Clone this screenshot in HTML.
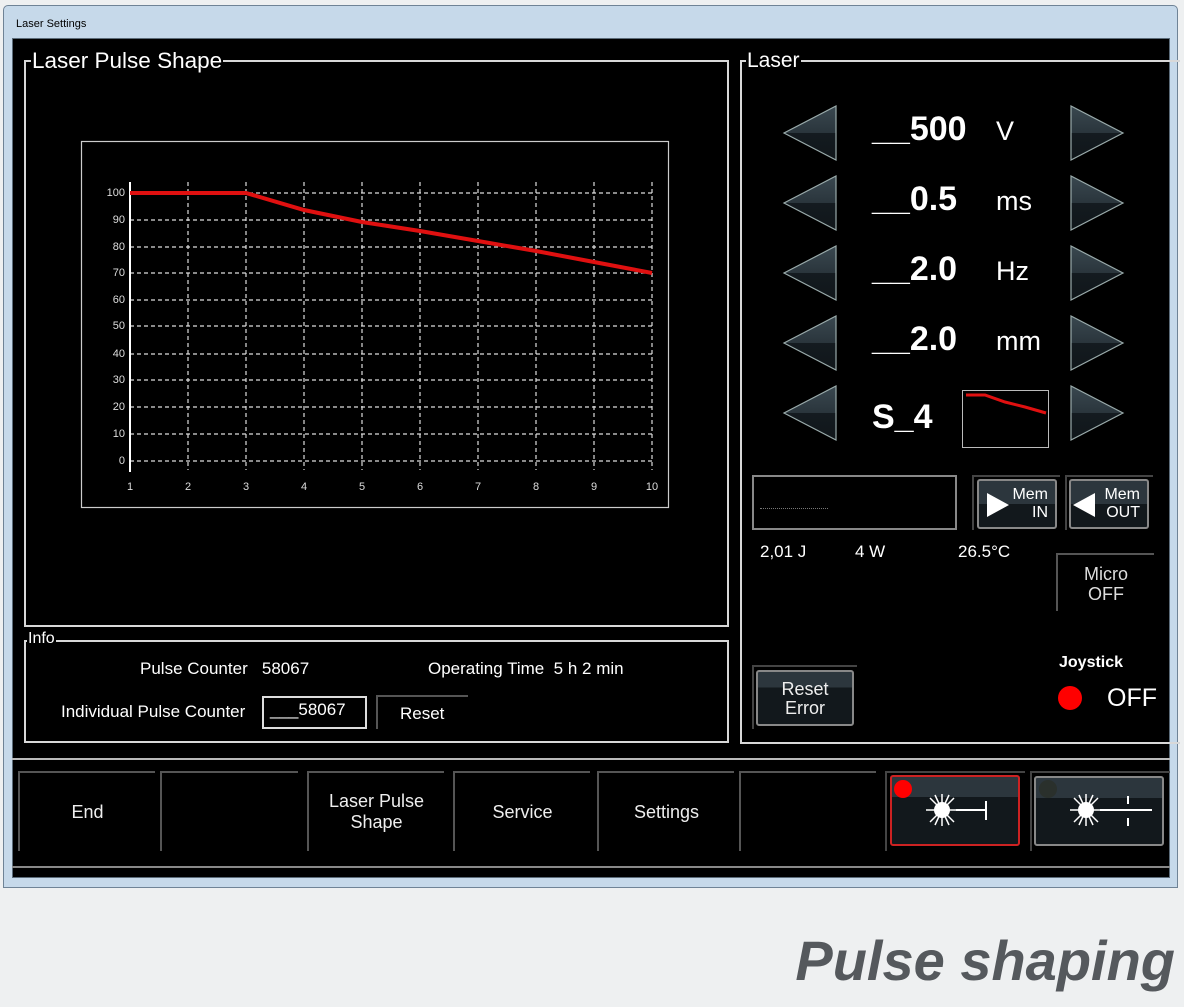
<!DOCTYPE html>
<html><head><meta charset="utf-8"><style>
*{margin:0;padding:0;box-sizing:border-box}
body{width:1184px;height:1007px;background:#eef0f1;position:relative;overflow:hidden;font-family:"Liberation Sans",sans-serif;color:#fff}
.abs{position:absolute}
.win{left:3px;top:5px;width:1175px;height:883px;background:#c6d9ea;border:1px solid #6f8396;border-radius:5px 5px 0 0}
.title{left:16px;top:18px;font-size:11px;color:#000}
.inner{left:12px;top:38px;width:1158px;height:840px;background:#000;border:1px solid #5c6c7a}
.grp{border:2px solid #d8d8d8}
.lbl{background:#000;padding:0 1px;line-height:1}
.t{position:absolute;white-space:nowrap}
.n{font-family:"Liberation Sans Narrow","Liberation Sans",sans-serif}
.btn{position:absolute;border-top:2px solid #555;border-left:2px solid #555;color:#eee;font-size:18px;text-align:center;display:flex;align-items:center;justify-content:center;line-height:1.15;font-family:"Liberation Sans Narrow","Liberation Sans",sans-serif}
</style></head><body>
<div class="abs win"></div>
<div class="abs title">Laser Settings</div>
<div class="abs inner"></div>

<div class="abs grp" style="left:24px;top:60px;width:705px;height:567px"></div>
<div class="abs lbl" style="left:31px;top:50px;font-size:22.5px">Laser Pulse Shape</div>
<svg class="abs" style="left:0;top:0" width="740" height="520">
<rect x="81.5" y="141.5" width="587" height="366" fill="#000" stroke="#ccc" stroke-width="1.2"/>
<g stroke="#ddd" stroke-width="1.2" stroke-dasharray="4,3">
<line x1="130" x2="654" y1="193" y2="193"/><line x1="130" x2="654" y1="220" y2="220"/><line x1="130" x2="654" y1="247" y2="247"/><line x1="130" x2="654" y1="273" y2="273"/><line x1="130" x2="654" y1="300" y2="300"/><line x1="130" x2="654" y1="326" y2="326"/><line x1="130" x2="654" y1="354" y2="354"/><line x1="130" x2="654" y1="380" y2="380"/><line x1="130" x2="654" y1="407" y2="407"/><line x1="130" x2="654" y1="434" y2="434"/><line x1="130" x2="654" y1="461" y2="461"/>
<line x1="188" x2="188" y1="182" y2="470"/><line x1="246" x2="246" y1="182" y2="470"/><line x1="304" x2="304" y1="182" y2="470"/><line x1="362" x2="362" y1="182" y2="470"/><line x1="420" x2="420" y1="182" y2="470"/><line x1="478" x2="478" y1="182" y2="470"/><line x1="536" x2="536" y1="182" y2="470"/><line x1="594" x2="594" y1="182" y2="470"/><line x1="652" x2="652" y1="182" y2="470"/>
</g>
<line x1="130" x2="130" y1="182" y2="472" stroke="#fff" stroke-width="2"/>
<g fill="#ddd" font-size="11" text-anchor="end" font-family="Liberation Sans">
<text x="125" y="196">100</text><text x="125" y="223">90</text><text x="125" y="250">80</text><text x="125" y="276">70</text><text x="125" y="303">60</text><text x="125" y="329">50</text><text x="125" y="357">40</text><text x="125" y="383">30</text><text x="125" y="410">20</text><text x="125" y="437">10</text><text x="125" y="464">0</text>
</g>
<g fill="#ddd" font-size="11" text-anchor="middle" font-family="Liberation Sans">
<text x="130" y="490">1</text><text x="188" y="490">2</text><text x="246" y="490">3</text><text x="304" y="490">4</text><text x="362" y="490">5</text><text x="420" y="490">6</text><text x="478" y="490">7</text><text x="536" y="490">8</text><text x="594" y="490">9</text><text x="652" y="490">10</text>
</g>
<polyline points="130,193 246,193 304,210 362,222 420,231 478,241 536,251 594,262 652,273" fill="none" stroke="#e01010" stroke-width="4"/>
</svg>

<div class="abs grp" style="left:24px;top:640px;width:705px;height:103px"></div>
<div class="abs lbl n" style="left:27px;top:631px;font-size:16px">Info</div>
<div class="t n" style="left:140px;top:659px;font-size:17px">Pulse Counter&nbsp;&nbsp; 58067</div>
<div class="t n" style="left:428px;top:659px;font-size:17px">Operating Time&nbsp; 5 h 2 min</div>
<div class="t n" style="left:61px;top:702px;font-size:17px">Individual Pulse Counter</div>
<div class="abs n" style="left:262px;top:696px;width:105px;height:33px;border:2px solid #ddd;font-size:17px;padding:2px 0 0 6px">___58067</div>
<div class="abs n" style="left:376px;top:695px;width:92px;height:34px;border-top:2px solid #555;border-left:2px solid #555;font-size:17px;padding:7px 0 0 22px">Reset</div>

<div class="abs grp" style="left:740px;top:60px;width:440px;height:684px;border-right:none"></div>
<div class="abs lbl" style="left:746px;top:50px;font-size:21px">Laser</div>

<svg class="abs" style="left:740px;top:90px" width="440" height="360">
<defs>
<linearGradient id="g" x1="0" y1="0" x2="0" y2="1"><stop offset="0" stop-color="#3a4850"/><stop offset=".5" stop-color="#2a353c"/><stop offset=".5" stop-color="#141b20"/><stop offset="1" stop-color="#10161a"/></linearGradient>
<g id="L"><polygon points="44,0 44,54 -8,27" fill="url(#g)" stroke="#9aa" stroke-width="1.2"/></g>
<g id="R"><polygon points="279,0 279,54 331,27" fill="url(#g)" stroke="#9aa" stroke-width="1.2"/></g>
</defs>
<g transform="translate(52,16)"><use href="#L"/><use href="#R"/></g>
<g transform="translate(52,86)"><use href="#L"/><use href="#R"/></g>
<g transform="translate(52,156)"><use href="#L"/><use href="#R"/></g>
<g transform="translate(52,226)"><use href="#L"/><use href="#R"/></g>
<g transform="translate(52,296)"><use href="#L"/><use href="#R"/></g>
<rect x="222.5" y="300.5" width="86" height="57" fill="#000" stroke="#bbb"/>
<polyline points="226,305 245,305 265,312 285,317 306,323" fill="none" stroke="#e01010" stroke-width="3"/>
</svg>
<div class="t" style="left:872px;top:110px;font-size:34px;font-weight:bold">__500</div><div class="t" style="left:996px;top:116px;font-size:27px">V</div>
<div class="t" style="left:872px;top:180px;font-size:34px;font-weight:bold">__0.5</div><div class="t" style="left:996px;top:186px;font-size:27px">ms</div>
<div class="t" style="left:872px;top:250px;font-size:34px;font-weight:bold">__2.0</div><div class="t" style="left:996px;top:256px;font-size:27px">Hz</div>
<div class="t" style="left:872px;top:320px;font-size:34px;font-weight:bold">__2.0</div><div class="t" style="left:996px;top:326px;font-size:27px">mm</div>
<div class="t" style="left:872px;top:398px;font-size:34px;font-weight:bold">S_4</div>

<div class="abs" style="left:752px;top:475px;width:205px;height:55px;border:2px solid #888"></div>
<div class="abs" style="left:760px;top:508px;width:68px;border-top:1px dotted #777"></div>
<div class="abs" style="left:972px;top:475px;width:88px;height:55px;border-top:2px solid #444;border-left:2px solid #444"></div>
<div class="abs" style="left:1065px;top:475px;width:88px;height:55px;border-top:2px solid #444;border-left:2px solid #444"></div>
<div class="abs" style="left:977px;top:479px;width:80px;height:50px;border:2px solid #888;border-radius:3px;background:linear-gradient(#2c363d 50%,#12181c 50%)"></div>
<div class="abs" style="left:1069px;top:479px;width:80px;height:50px;border:2px solid #888;border-radius:3px;background:linear-gradient(#2c363d 50%,#12181c 50%)"></div>
<svg class="abs" style="left:985px;top:489px" width="30" height="32"><polygon points="2,4 2,28 24,16" fill="#fff"/></svg>
<svg class="abs" style="left:1071px;top:489px" width="30" height="32"><polygon points="24,4 24,28 2,16" fill="#fff"/></svg>
<div class="t n" style="left:1008px;top:486px;font-size:16px;text-align:right;width:40px;line-height:18px">Mem<br>IN</div>
<div class="t n" style="left:1098px;top:486px;font-size:16px;text-align:right;width:42px;line-height:18px">Mem<br>OUT</div>
<div class="t n" style="left:760px;top:542px;font-size:17px">2,01 J</div>
<div class="t n" style="left:855px;top:542px;font-size:17px">4 W</div>
<div class="t n" style="left:958px;top:542px;font-size:17px">26.5°C</div>
<div class="abs n" style="left:1056px;top:553px;width:98px;height:58px;border-top:2px solid #555;border-left:2px solid #555;font-size:18px;text-align:center;padding-top:9px;line-height:20px;color:#ddd">Micro<br>OFF</div>
<div class="t" style="left:1059px;top:654px;font-size:16px;font-weight:bold">Joystick</div>
<div class="abs" style="left:1058px;top:686px;width:24px;height:24px;border-radius:50%;background:#f00"></div>
<div class="t" style="left:1107px;top:684px;font-size:25px">OFF</div>
<div class="abs" style="left:752px;top:665px;width:105px;height:64px;border-top:2px solid #444;border-left:2px solid #444"></div>
<div class="abs n" style="left:756px;top:670px;width:98px;height:56px;border:2px solid #888;border-radius:3px;background:linear-gradient(#2c363d 30%,#12181c 30%);font-size:18px;text-align:center;padding-top:8px;line-height:19px;color:#eee">Reset<br>Error</div>

<div class="abs" style="left:12px;top:758px;width:1158px;border-top:2px solid #bbb"></div>
<div class="abs" style="left:12px;top:866px;width:1158px;border-top:2px solid #888"></div>
<div class="btn" style="left:18px;top:771px;width:137px;height:80px">End</div>
<div class="btn" style="left:160px;top:771px;width:138px;height:80px"></div>
<div class="btn" style="left:307px;top:771px;width:137px;height:80px">Laser Pulse<br>Shape</div>
<div class="btn" style="left:453px;top:771px;width:137px;height:80px">Service</div>
<div class="btn" style="left:597px;top:771px;width:137px;height:80px">Settings</div>
<div class="btn" style="left:739px;top:771px;width:137px;height:80px"></div>
<div class="abs" style="left:885px;top:771px;width:140px;height:80px;border-top:2px solid #444;border-left:2px solid #444"></div>
<div class="abs" style="left:1030px;top:771px;width:140px;height:80px;border-top:2px solid #444;border-left:2px solid #444"></div>
<div class="abs" style="left:890px;top:775px;width:130px;height:71px;border:2px solid #c22;border-radius:3px;background:linear-gradient(#2c363d 30%,#12181c 30%)"></div>
<div class="abs" style="left:1034px;top:776px;width:130px;height:70px;border:2px solid #888;border-radius:3px;background:linear-gradient(#2c363d 30%,#12181c 30%)"></div>
<div class="abs" style="left:894px;top:780px;width:18px;height:18px;border-radius:50%;background:#f00"></div>
<div class="abs" style="left:1039px;top:780px;width:18px;height:18px;border-radius:50%;background:#2a302c"></div>
<svg class="abs" style="left:920px;top:790px" width="80" height="40">
<g stroke="#fff" stroke-width="1.5"><line x1="6" y1="20" x2="38" y2="20"/><line x1="22" y1="4" x2="22" y2="36"/><line x1="10" y1="8" x2="34" y2="32"/><line x1="34" y1="8" x2="10" y2="32"/><line x1="15" y1="5" x2="29" y2="35"/><line x1="29" y1="5" x2="15" y2="35"/><line x1="36" y1="20" x2="66" y2="20" stroke-width="2"/><line x1="66" y1="11" x2="66" y2="30" stroke-width="2"/></g>
<circle cx="22" cy="20" r="8" fill="#fff"/></svg>
<svg class="abs" style="left:1064px;top:790px" width="100" height="40">
<g stroke="#fff" stroke-width="1.5"><line x1="6" y1="20" x2="38" y2="20"/><line x1="22" y1="4" x2="22" y2="36"/><line x1="10" y1="8" x2="34" y2="32"/><line x1="34" y1="8" x2="10" y2="32"/><line x1="15" y1="5" x2="29" y2="35"/><line x1="29" y1="5" x2="15" y2="35"/><line x1="36" y1="20" x2="88" y2="20" stroke-width="2"/><line x1="64" y1="6" x2="64" y2="14" stroke-width="2"/><line x1="64" y1="28" x2="64" y2="36" stroke-width="2"/></g>
<circle cx="22" cy="20" r="8" fill="#fff"/></svg>

<div class="t" style="right:9px;top:928px;font-size:56px;font-weight:bold;font-style:italic;color:#55595d">Pulse shaping</div>
</body></html>
